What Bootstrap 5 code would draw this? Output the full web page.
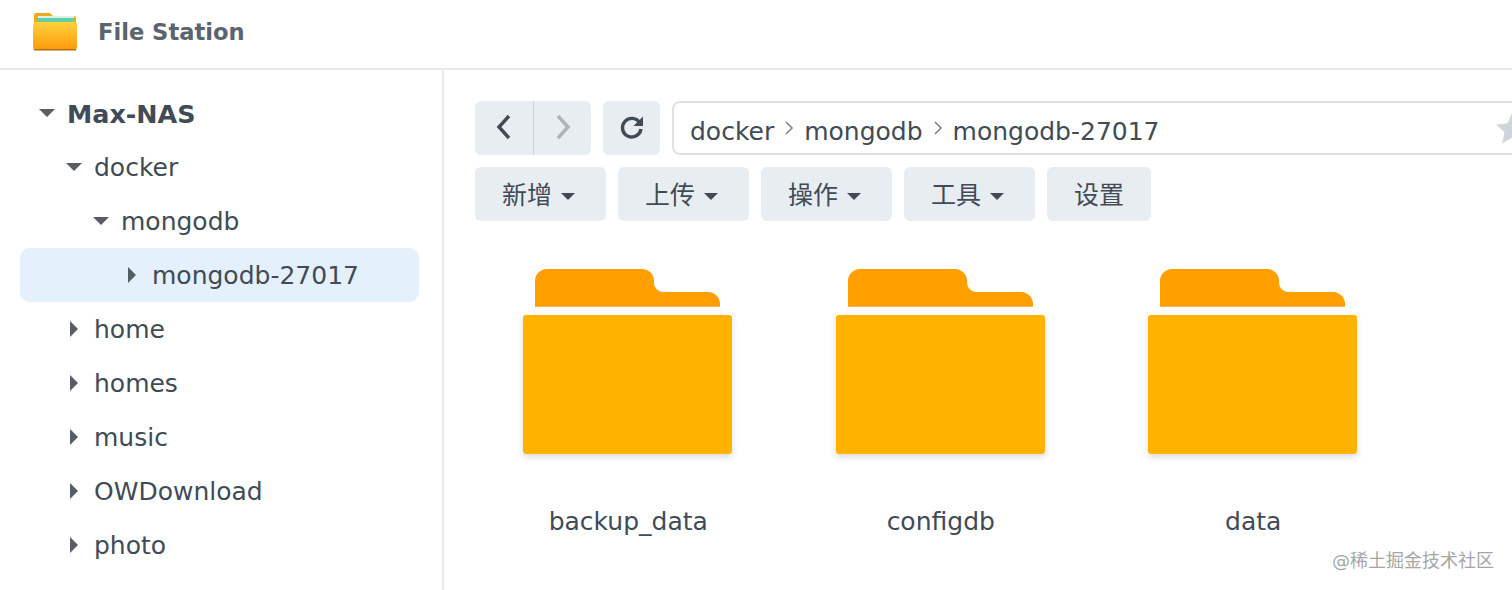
<!DOCTYPE html>
<html lang="zh-CN">
<head>
  <meta charset="UTF-8" />
  <title>File Station</title>
  <meta name="viewport" content="width=device-width, initial-scale=1" />
  <link href="https://cdn.jsdelivr.net/npm/bootstrap@5.3.2/dist/css/bootstrap.min.css" rel="stylesheet" />
  <style>
    html, body {
      height: 590px;
      overflow: hidden;
    }
    body {
      background: #fff;
      color: #414b55;
      font-family: "DejaVu Sans", "Noto Sans CJK SC", sans-serif;
      font-size: 25px;
    }
    .app-head {
      height: 70px;
      border-bottom: 2px solid #e6eaed;
      padding: 0 0 4px 33px;
      gap: 20px;
    }
    .app-title {
      color: #5a646e;
      font-weight: 700;
      font-size: 22.6px;
      padding-top: 2px;
    }
    .app-body {
      height: 520px;
    }
    .tree-side {
      width: 444px;
      flex: none;
      border-right: 2px solid #e6eaed;
      padding: 16px 23px 0 20px;
      overflow: hidden;
    }
    .tree-row {
      height: 54px;
      border-radius: 10px;
      white-space: nowrap;
      padding-top: 2px;
    }
    .tree-row:last-child { padding-top: 7px; }
    .tree-row.is-root { padding-left: 19px; font-weight: 700; font-size: 25.4px; }
    .tree-row.lvl-1 { padding-left: 46px; }
    .tree-row.lvl-2 { padding-left: 73px; }
    .tree-row.lvl-3 { padding-left: 104px; }
    .tree-row.is-active { background: #e4f0fb; }
    .tree-arrow {
      width: 16px;
      margin-right: 12px;
      margin-top: -2px;
      flex: none;
    }
    .tree-arrow.is-open {
      border-top: 8px solid #565d64;
      border-left: 8px solid transparent;
      border-right: 8px solid transparent;
    }
    .tree-arrow.is-closed {
      height: 16px;
      background: #565d64;
      clip-path: polygon(4px 0, 12px 8px, 4px 16px);
    }
    .file-main {
      min-width: 0;
      padding: 31px 0 0 31px;
      overflow: hidden;
    }
    .bar-line {
      gap: 12px;
      height: 54px;
      width: 1072px;
      margin-bottom: 12px;
    }
    .tool-btn {
      --bs-btn-bg: #e8edf1;
      --bs-btn-hover-bg: #e8edf1;
      --bs-btn-active-bg: #dfe5ea;
      --bs-btn-color: #414b55;
      --bs-btn-hover-color: #414b55;
      --bs-btn-border-width: 0;
      --bs-btn-border-radius: 6px;
      --bs-btn-font-size: 25px;
      --bs-btn-padding-x: 27px;
      --bs-btn-padding-y: 0;
      height: 54px;
      line-height: 54px;
      display: inline-flex;
      align-items: center;
      white-space: nowrap;
      padding-top: 4px;
    }
    .tool-btn.dropdown-toggle {
      padding-right: 31px;
    }
    .tool-btn.dropdown-toggle::after {
      margin-left: 9px;
      border-top-width: 7px;
      border-right-width: 7px;
      border-left-width: 7px;
      vertical-align: middle;
    }
    .tool-btn.icon-only {
      --bs-btn-padding-x: 0;
      width: 58px;
      justify-content: center;
      padding-top: 0;
      padding-bottom: 2px;
    }
    .tool-btn.icon-reload {
      width: 57px;
    }
    .nav-pair .tool-btn + .tool-btn {
      border-left: 1px solid #cdd4da;
    }
    .path-box {
      flex: 1;
      height: 54px;
      border: 2px solid #dde2e7;
      border-radius: 8px;
      padding: 0 0 0 16px;
    }
    .path-text {
      padding-top: 8px;
    }
    .path-sep {
      margin: 0 10px;
      flex: none;
    }
    .folder-grid {
      margin-top: 42px;
      margin-left: -3px;
    }
    .folder-tile {
      width: 312.5px;
    }
    .folder-art {
      display: block;
      width: 222px;
      height: 200px;
      margin: 0 auto;
    }
    .folder-name {
      margin-top: 42px;
      line-height: 34px;
      text-align: center;
    }
    .mark-note {
      position: absolute;
      right: 18px;
      bottom: 17px;
      color: #a6a6a6;
      font-size: 18px;
      line-height: 24px;
      background: #fff;
    }
  </style>
</head>
<body>
  <header class="app-head d-flex align-items-center">
    <svg width="45" height="40" viewBox="0 0 45 40">
      <defs>
        <linearGradient id="appFold" x1="0" y1="0" x2="0" y2="1">
          <stop offset="0" stop-color="#ffd23c" />
          <stop offset="1" stop-color="#fe9a0c" />
        </linearGradient>
      </defs>
      <path d="M1 7V3a2 2 0 0 1 2-2h14l3 3h21a2 2 0 0 1 2 2v6H1z" fill="#f0a91e" />
      <rect x="5" y="4" width="36" height="8" fill="#62cfa6" />
      <rect x="5" y="4" width="36" height="2" fill="#d8f3e6" />
      <rect x="0" y="10" width="44" height="28" rx="3" fill="url(#appFold)" />
      <rect x="1" y="37" width="42" height="1.5" fill="#b56c10" />
    </svg>
    <span class="app-title">File Station</span>
  </header>

  <div class="app-body d-flex">
    <nav class="tree-side">
      <div class="tree-row is-root d-flex align-items-center"><span class="tree-arrow is-open"></span>Max-NAS</div>
      <div class="tree-row lvl-1 d-flex align-items-center"><span class="tree-arrow is-open"></span>docker</div>
      <div class="tree-row lvl-2 d-flex align-items-center"><span class="tree-arrow is-open"></span>mongodb</div>
      <div class="tree-row lvl-3 is-active d-flex align-items-center"><span class="tree-arrow is-closed"></span>mongodb-27017</div>
      <div class="tree-row lvl-1 d-flex align-items-center"><span class="tree-arrow is-closed"></span>home</div>
      <div class="tree-row lvl-1 d-flex align-items-center"><span class="tree-arrow is-closed"></span>homes</div>
      <div class="tree-row lvl-1 d-flex align-items-center"><span class="tree-arrow is-closed"></span>music</div>
      <div class="tree-row lvl-1 d-flex align-items-center"><span class="tree-arrow is-closed"></span>OWDownload</div>
      <div class="tree-row lvl-1 d-flex align-items-center"><span class="tree-arrow is-closed"></span>photo</div>
      <div class="tree-row lvl-1 d-flex align-items-center"><span class="tree-arrow is-closed"></span>video</div>
    </nav>

    <main class="file-main flex-grow-1">
      <div class="bar-line d-flex">
        <div class="btn-group nav-pair">
          <button type="button" class="btn tool-btn icon-only">
            <svg width="18" height="26" viewBox="0 0 18 26"><path d="M14 2 4 13l10 11" fill="none" stroke="#414b55" stroke-width="3.4" /></svg>
          </button>
          <button type="button" class="btn tool-btn icon-only ms-0">
            <svg width="18" height="26" viewBox="0 0 18 26"><path d="M4 2l10 11L4 24" fill="none" stroke="#acb3ba" stroke-width="3.4" /></svg>
          </button>
        </div>
        <button type="button" class="btn tool-btn icon-only icon-reload">
          <svg width="26" height="26" viewBox="0 0 26 26"><path d="M20.5 8.5A9.3 9.3 0 1 0 22 15" fill="none" stroke="#414b55" stroke-width="3.4" /><path d="M24 2.5V12h-9.5z" fill="#414b55" /></svg>
        </button>
        <div class="path-box d-flex align-items-center">
          <span class="path-text">docker</span>
          <svg class="path-sep" width="10" height="16" viewBox="0 0 10 16"><path d="M2 2l6 6-6 6" fill="none" stroke="#7d858d" stroke-width="1.6" /></svg>
          <span class="path-text">mongodb</span>
          <svg class="path-sep" width="10" height="16" viewBox="0 0 10 16"><path d="M2 2l6 6-6 6" fill="none" stroke="#7d858d" stroke-width="1.6" /></svg>
          <span class="path-text">mongodb-27017</span>
          <svg class="ms-auto me-3" width="34" height="32" viewBox="0 0 34 32"><path d="M17 1l4.6 10.4L33 12.600l-8.500 7.600 2.400 11.200L17 25.700 7.100 31.400l2.400-11.200L1 12.600l11.400-1.200z" fill="#d0d5dc" /></svg>
        </div>
      </div>
      <div class="bar-line d-flex">
        <button type="button" class="btn tool-btn dropdown-toggle">新增</button>
        <button type="button" class="btn tool-btn dropdown-toggle">上传</button>
        <button type="button" class="btn tool-btn dropdown-toggle">操作</button>
        <button type="button" class="btn tool-btn dropdown-toggle">工具</button>
        <button type="button" class="btn tool-btn">设置</button>
      </div>

      <div class="folder-grid d-flex">
        <div class="folder-tile">
          <svg class="folder-art" viewBox="0 0 222 200">
            <use href="#folderShape" />
          </svg>
          <div class="folder-name">backup_data</div>
        </div>
        <div class="folder-tile">
          <svg class="folder-art" viewBox="0 0 222 200">
            <use href="#folderShape" />
          </svg>
          <div class="folder-name">configdb</div>
        </div>
        <div class="folder-tile">
          <svg class="folder-art" viewBox="0 0 222 200">
            <use href="#folderShape" />
          </svg>
          <div class="folder-name">data</div>
        </div>
      </div>
    </main>
  </div>

  <div class="mark-note">@稀土掘金技术社区</div>

  <svg width="0" height="0" class="position-absolute">
    <defs>
      <filter id="folderShadow" x="-10%" y="-10%" width="120%" height="125%">
        <feDropShadow dx="0" dy="3" stdDeviation="3" flood-color="#000" flood-opacity="0.14" />
      </filter>
      <g id="folderShape">
        <path d="M18 44V18a12 12 0 0 1 12-12h95a12 12 0 0 1 12 12v2a9 9 0 0 0 9 9h45a12 12 0 0 1 12 12v3z" fill="#ffa000" />
        <rect x="18" y="44" width="186" height="9" fill="#fff" stroke="#eceef0" stroke-width="0.6" />
        <rect x="6" y="52" width="209" height="139" rx="3" fill="#ffb300" filter="url(#folderShadow)" />
      </g>
    </defs>
  </svg>

  <script src="https://cdn.jsdelivr.net/npm/bootstrap@5.3.2/dist/js/bootstrap.bundle.min.js"></script>
</body>
</html>
